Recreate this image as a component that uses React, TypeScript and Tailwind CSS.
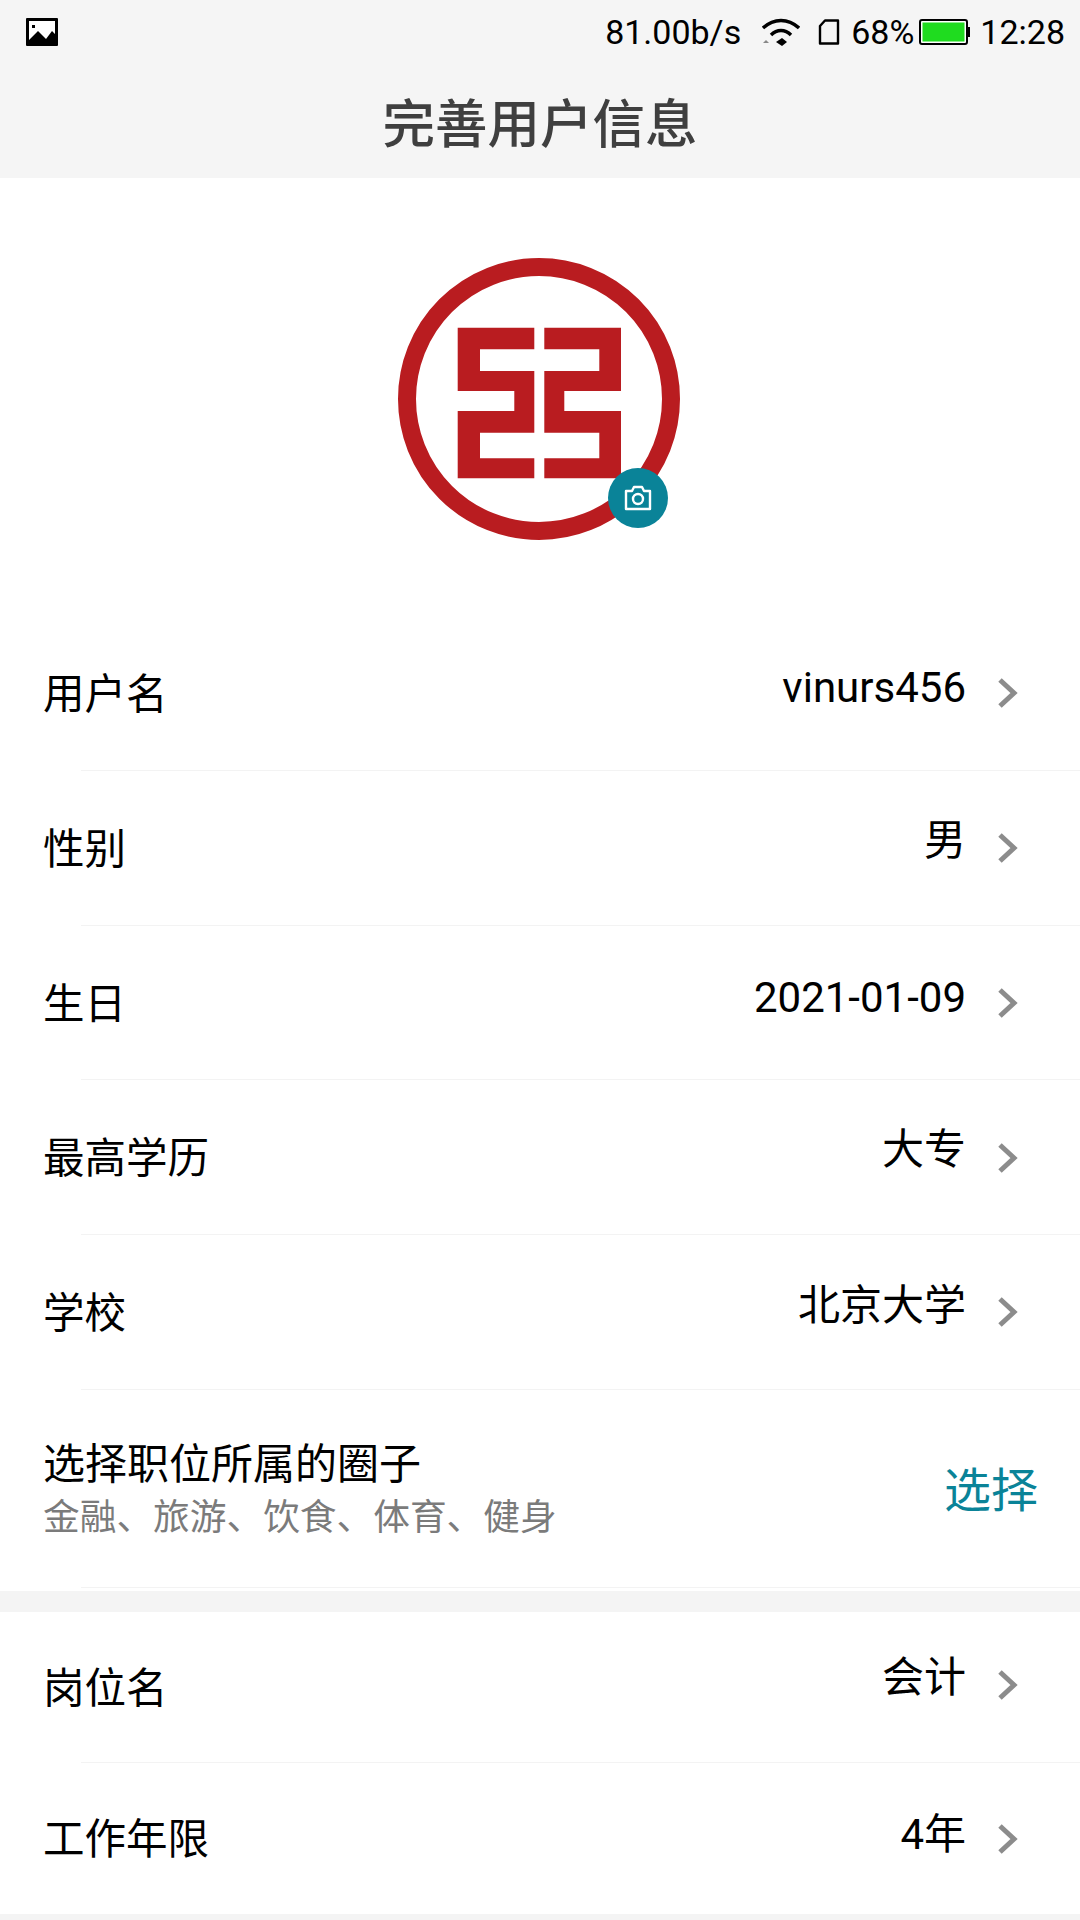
const font = "font-['Roboto','Noto_Sans_CJK_SC',sans-serif]";

function Chevron({ className = "" }: { className?: string }) {
  return (
    <svg width="20" height="32" viewBox="0 0 20 32" className={`shrink-0 ${className}`}>
      <path d="M2 3 L16 16 L2 29" fill="none" stroke="#8c8c8c" strokeWidth="5" />
    </svg>
  );
}

function Row({
  label,
  value,
  valueClass,
  chevronClass,
  short,
  last,
}: {
  label: string;
  value: string;
  valueClass: string;
  chevronClass?: string;
  short?: boolean;
  last?: boolean;
}) {
  return (
    <div className={`relative flex shrink-0 items-center pl-[43px] pr-[62px] ${short ? "h-[151px]" : "h-[154.75px]"}`}>
      <span className="mt-[3px] text-[41.500px] leading-none text-black">{label}</span>
      <span className={`ml-auto mr-[32px] text-[42px] leading-none text-black ${valueClass}`}>{value}</span>
      <Chevron className={chevronClass} />
      {!last && <div className="absolute bottom-0 left-[81px] right-0 h-[1px] bg-[#f3f3f3]" />}
    </div>
  );
}

function Logo() {
  return (
    <svg width="284" height="284" viewBox="0 0 284 284">
      <circle cx="141" cy="142" r="132" fill="none" stroke="#b91c20" strokeWidth="18" />
      <path
        fill="#b91c20"
        d="M59.700 70.700H136.300V92.300H82V114H136.300V175.700H82V201.300H136.300V221.300H59.700V154H116.300V134H59.700Z"
      />
      <path
        fill="#b91c20"
        d="M146.300 70.700H223V134H166.300V154H223V221.300H146.300V201.300H201.300V175.700H146.300V114H201.300V92.300H146.300Z"
      />
    </svg>
  );
}

export default function App() {
  return (
    <div className={`flex h-[1920px] w-[1080px] flex-col overflow-hidden bg-white ${font}`}>
      <header className="h-[178px] shrink-0 bg-[#f5f5f5]">
        <div className="flex h-[64px] items-center pl-[26px] pr-[15px] text-[34px] leading-none text-black">
          <svg width="32" height="28" viewBox="0 0 32 28">
            <rect width="32" height="28" rx="1" fill="#000" />
            <rect x="3" y="3" width="26" height="21" fill="#fff" />
            <path d="M3 22 L12 13 L20 21 L26 13 L29 16 V25 H3Z" fill="#000" />
            <rect x="6" y="7" width="3" height="3" fill="#000" />
          </svg>
          <span className="ml-auto">81.00b/s</span>
          <svg width="38" height="28" viewBox="0 0 38 28" className="ml-[21px]">
            <path d="M1 10 C12 0 26 0 37 10" fill="none" stroke="#000" strokeWidth="3.400" />
            <path d="M9 17 C15 11 23 11 29 17" fill="none" stroke="#000" strokeWidth="3.400" />
            <path d="M14 24 L20 20 L25 24 L20 28Z" fill="#000" />
            <path d="M1 25 L4 22 L7 25Z" fill="#888" />
          </svg>
          <svg width="22" height="26" viewBox="0 0 22 26" className="ml-[18px]">
            <path d="M7 1.500 H20 V24.500 H2 V7Z" fill="none" stroke="#000" strokeWidth="2.400" strokeLinejoin="round" />
          </svg>
          <span className="ml-[11px]">68%</span>
          <svg width="52" height="26" viewBox="0 0 52 26" className="ml-[5px]">
            <rect x="1" y="1" width="47" height="24" rx="2" fill="#fff" stroke="#000" strokeWidth="2" />
            <rect x="3.500" y="3.500" width="42" height="19" fill="#1fdc1f" />
            <rect x="48" y="8" width="3" height="10" fill="#000" />
          </svg>
          <span className="ml-[9px]">12:28</span>
        </div>
        <div className="flex h-[114px] items-center justify-center pt-[8px]">
          <h1 className="text-[52.500px] font-medium leading-none text-[#3f3f3f]">完善用户信息</h1>
        </div>
      </header>

      <section className="flex h-[438px] shrink-0 justify-center pt-[79px]">
        <div className="relative h-[284px] w-[284px]">
          <Logo />
          <div className="absolute left-[210px] top-[211px] flex h-[60px] w-[60px] items-center justify-center rounded-full bg-[#0a8398]">
            <svg width="28" height="26" viewBox="0 0 28 26">
              <path
                d="M2 6 H8 L10 2 H18 L20 6 H26 V24 H2Z"
                fill="none"
                stroke="#fff"
                strokeWidth="2.400"
                strokeLinejoin="round"
              />
              <circle cx="14" cy="14" r="5" fill="none" stroke="#fff" strokeWidth="2.400" />
            </svg>
          </div>
        </div>
      </section>

      <Row label="用户名" value="vinurs456" valueClass="mb-[10px]" />
      <Row label="性别" value="男" valueClass="mb-[14px]" />
      <Row label="生日" value="2021-01-09" valueClass="mb-[10px]" />
      <Row label="最高学历" value="大专" valueClass="mb-[15px]" />
      <Row label="学校" value="北京大学" valueClass="mb-[12px]" />

      <div className="relative flex h-[201px] shrink-0 items-center pl-[43px] pr-[42px]">
        <div className="flex flex-col pb-[1px]">
          <span className="text-[42px] leading-[46px] text-black">选择职位所属的圈子</span>
          <span className="mt-[10px] text-[36.700px] leading-[40px] text-[#7b7b7b]">金融、旅游、饮食、体育、健身</span>
        </div>
        <span className="ml-auto text-[47px] leading-none text-[#0a8398]">选择</span>
        <div className="absolute bottom-[3px] left-[81px] right-0 h-[1px] bg-[#f3f3f3]" />
      </div>

      <div className="h-[21px] shrink-0 bg-[#f4f4f4]" />

      <Row label="岗位名" value="会计" valueClass="mb-[18px]" chevronClass="mb-[4px]" short />
      <Row label="工作年限" value="4年" valueClass="mb-[6px]" chevronClass="mt-[1px]" short last />

      <div className="flex-1 bg-[#f4f4f4]" />
    </div>
  );
}
